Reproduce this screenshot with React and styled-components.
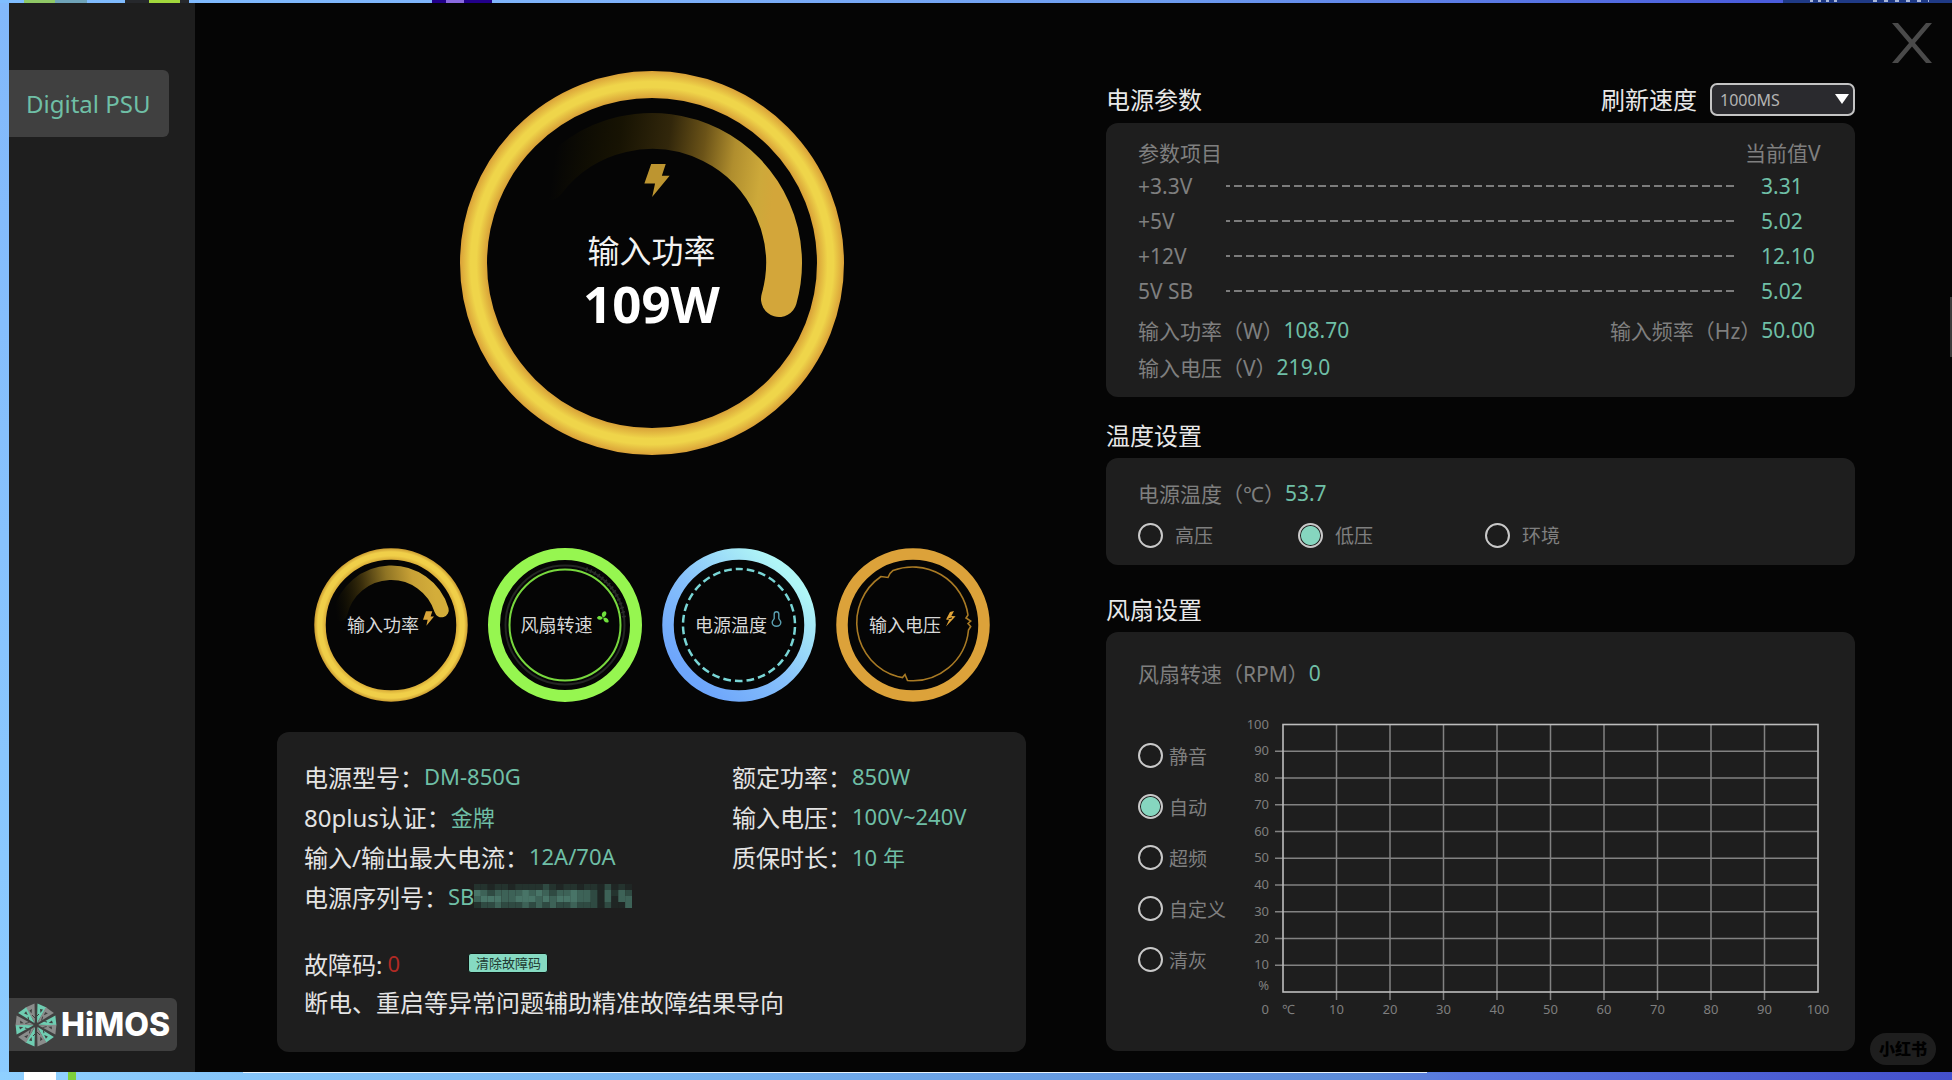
import React, { useState } from "react";
import styled, { createGlobalStyle } from "styled-components";

const Global = createGlobalStyle`
  *, *::before, *::after { box-sizing: border-box; }
  body { margin: 0; background: #050505; }
  body, button, select, input {
    font-family: "Noto Sans", "Noto Sans CJK SC", sans-serif;
  }
  h1, h2, p, dl, dd, dt, fieldset { margin: 0; padding: 0; border: 0; }
`;

const mint = "#6fbfa6";

/* ---------- frame ---------- */

const Desktop = styled.div`
  position: relative;
  min-height: 100vh;
  padding: 3px 0 8px 9px;
  display: flex;
  overflow: hidden;
  background:
    linear-gradient(#8fc866, #8fc866) 24px 0 / 31px 3px no-repeat,
    linear-gradient(#6fa3b8, #6fa3b8) 55px 0 / 32px 3px no-repeat,
    linear-gradient(90deg, #26282c 0 24px, #a2d83c 24px 55px, #26282c 55px) 125px 0 / 64px 3px no-repeat,
    linear-gradient(90deg, #22008a 0 14px, #8a6ae0 14px 32px, #22008a 32px) 432px 0 / 60px 3px no-repeat,
    repeating-linear-gradient(90deg, #aab8dc 0 3px, #1f3a86 3px 8px) 1810px 0 / 30px 2px no-repeat,
    repeating-linear-gradient(90deg, #aab8dc 0 4px, #1f3a86 4px 11px) 1873px 0 / 56px 2px no-repeat,
    linear-gradient(#1f3a86, #1f3a86) 1783px 0 / 200px 3px no-repeat,
    linear-gradient(90deg, #ffffff 0 32px, #8fd0ff 32px 44px, #7ed03a 44px) 24px 100% / 52px 8px no-repeat,
    linear-gradient(#e8f2fb, #e8f2fb) 243px calc(100% - 7px) / 1184px 1px no-repeat,
    linear-gradient(90deg, #7fbdff 0, #7fb3fb 30%, #6d9cf0 60%, #4a5cdc 90%) 0 0 / 100% 3px no-repeat,
    linear-gradient(90deg, #8fd0ff 0, #74b2f0 35%, #5b8ad8 70%, #5876e0 75%, #4450cc 100%) 0 100% / 100% 8px no-repeat,
    linear-gradient(#82b8fb, #8cccff);
`;

const Window = styled.div`
  position: relative;
  flex: 1;
  display: flex;
  background: #050505;
`;

const Sidebar = styled.nav`
  flex: none;
  width: 186px;
  padding: 67px 0 21px;
  display: flex;
  flex-direction: column;
  justify-content: space-between;
  align-items: flex-start;
  background: #1e1e1e;
`;

const TabButton = styled.button`
  width: 160px;
  height: 67px;
  padding: 0 0 0 17px;
  border: 0;
  border-radius: 0 6px 6px 0;
  background: #404040;
  color: ${mint};
  font-size: 24px;
  text-align: left;
  cursor: pointer;
`;

const Brand = styled.div`
  width: 168px;
  height: 53px;
  padding-left: 5px;
  display: flex;
  align-items: center;
  gap: 3px;
  border-radius: 0 6px 6px 0;
  background: #404040;
  color: #fff;
  font-family: Inter, sans-serif;
  font-size: 32px;
  font-weight: 800;
`;

const Main = styled.main`
  flex: 1;
  min-width: 0;
  padding: 68px 97px 20px 82px;
  display: flex;
  align-items: flex-start;
  gap: 80px;
`;

const Column = styled.section`
  flex: 1;
  min-width: 0;
  display: flex;
  flex-direction: column;
`;

const RightColumn = styled(Column)`
  padding-top: 12px;
`;

const CloseButton = styled.button`
  position: absolute;
  top: 20px;
  right: 20px;
  width: 40px;
  height: 40px;
  padding: 0;
  border: 0;
  background: none;
  cursor: pointer;
  svg { display: block; }
`;

const ScrollThumb = styled.div`
  position: absolute;
  top: 294px;
  right: 0;
  width: 2px;
  height: 60px;
  background: #3c3c3c;
`;

const Watermark = styled.div`
  position: absolute;
  right: 16px;
  bottom: 7px;
  width: 66px;
  height: 32px;
  border-radius: 16px;
  background: #1e1e1e;
  color: #000;
  font-size: 16px;
  font-weight: 900;
  line-height: 32px;
  text-align: center;
`;

/* ---------- gauges ---------- */

const BigGauge = styled.div`
  align-self: center;
  width: 384px;
  height: 384px;
  display: grid;
  > * { grid-area: 1 / 1; }
`;

const BigGaugeText = styled.div`
  padding-top: 93px;
  display: flex;
  flex-direction: column;
  align-items: center;
  svg { margin: 0 0 34px 10px; }
`;

const BigLabel = styled.span`
  color: #f2f2f2;
  font-size: 32px;
  line-height: 40px;
`;

const BigValue = styled.strong`
  margin-top: 2px;
  color: #fff;
  font-size: 51px;
  font-weight: 700;
  line-height: 60px;
`;

const GaugeRow = styled.div`
  margin: 93px 0 30px;
  display: flex;
  justify-content: center;
  gap: 20px;
`;

const GaugeButton = styled.button`
  width: 154px;
  height: 154px;
  padding: 0;
  border: 0;
  border-radius: 50%;
  background: none;
  display: grid;
  cursor: pointer;
  > * { grid-area: 1 / 1; }
`;

const GaugeLabel = styled.span`
  display: flex;
  align-items: flex-start;
  align-self: center;
  justify-content: center;
  gap: 4px;
  color: #d8d8d8;
  font-size: 18px;
  line-height: 28px;
`;

/* ---------- cards ---------- */

const Card = styled.div`
  border-radius: 12px;
  background: #1e1e1e;
`;

const InfoCard = styled(Card)`
  padding: 24px 27px 29px;
`;

const InfoGrid = styled.dl`
  display: grid;
  grid-template-columns: 428px 1fr;
`;

const InfoItem = styled.div`
  display: flex;
  align-items: center;
  height: 40px;
  white-space: nowrap;
`;

const InfoLabel = styled.dt`
  color: #e4e4e4;
  font-size: 24px;
`;

const InfoValue = styled.dd`
  display: flex;
  align-items: center;
  color: ${mint};
  font-size: 22px;
`;

const FaultRow = styled.div`
  height: 40px;
  margin-top: 27px;
  display: flex;
  align-items: center;
  color: #e4e4e4;
  font-size: 24px;
`;

const FaultCode = styled.span`
  width: 81px;
  margin-left: 5px;
  color: #b02a24;
  font-size: 22px;
`;

const ClearButton = styled.button`
  width: 80px;
  height: 20px;
  padding: 0;
  border: 1px solid #0c1512;
  border-radius: 3px;
  background: #86dac2;
  color: #1f3a32;
  font-size: 13px;
  line-height: 16px;
  cursor: pointer;
`;

const Note = styled.p`
  color: #e4e4e4;
  font-size: 24px;
  line-height: 40px;
`;

const Heading = styled.h2`
  color: #e8e8e8;
  font-size: 24px;
  font-weight: 400;
  line-height: 32px;
`;

const SectionHeading = styled(Heading)`
  margin: ${(p) => p.$gap}px 0 6px;
`;

const HeadRow = styled.div`
  margin-bottom: 7px;
  height: 33px;
  display: flex;
  align-items: center;
  justify-content: space-between;
`;

const Refresh = styled.label`
  display: flex;
  align-items: center;
  gap: 13px;
  color: #e8e8e8;
  font-size: 24px;
  line-height: 32px;
`;

const SelectBox = styled.span`
  position: relative;
  display: block;
  &::after {
    content: "";
    position: absolute;
    top: 11px;
    right: 6px;
    border: 7px solid transparent;
    border-top: 10px solid #fff;
    border-bottom: 0;
    pointer-events: none;
  }
`;

const Select = styled.select`
  appearance: none;
  display: block;
  width: 145px;
  height: 33px;
  padding: 0 8px;
  border: 2px solid #c4c4c4;
  border-radius: 7px;
  background: #2a2a2e;
  color: #b4b4b4;
  font-size: 16px;
`;

const ParamCard = styled(Card)`
  padding: 14px 32px 12px;
`;

const ParamTable = styled.table`
  width: 100%;
  table-layout: fixed;
  border-collapse: collapse;
  color: #7f7f7f;
  font-size: 21px;
  line-height: 30px;
  th, td { padding: 0; font-weight: 400; text-align: left; white-space: nowrap; }
  thead tr { height: 31px; }
  tbody tr { height: 35px; }
`;

const LabelCol = styled.col` width: 88px; `;
const ValueCol = styled.col` width: 78px; `;

const Dashes = styled.div`
  height: 2px;
  margin-right: 9px;
  background: repeating-linear-gradient(90deg, #7c7c7c 0 4px, transparent 4px 8px, #7c7c7c 8px 12px);
`;

const ValueCell = styled.td`
  && { padding-left: 16px; }
  color: ${mint};
`;

const Readings = styled.dl`
  margin-top: 3px;
  padding-right: 8px;
  display: grid;
  grid-template-columns: 1fr auto;
`;

const Reading = styled.div`
  height: ${(p) => p.$height}px;
  display: flex;
  align-items: center;
  color: #7f7f7f;
  font-size: 21px;
  white-space: nowrap;
  dd { color: ${mint}; }
`;

const TempCard = styled(Card)`
  padding: 14px 32px 9px;
`;

const RadioRow = styled.fieldset`
  height: 42px;
  display: flex;
  align-items: center;
`;

const RadioColumn = styled.fieldset`
  flex: none;
  width: 102px;
  padding-top: 36px;
`;

const RadioLabel = styled.label`
  width: ${(p) => (p.$width ? p.$width + "px" : "auto")};
  height: ${(p) => p.$height}px;
  display: flex;
  align-items: center;
  gap: ${(p) => p.$gap}px;
  color: #7f7f7f;
  font-size: 19px;
  white-space: nowrap;
  cursor: pointer;
`;

const Radio = styled.input`
  appearance: none;
  flex: none;
  width: 25px;
  height: 25px;
  margin: 0;
  border: 2px solid #c9c9c9;
  border-radius: 50%;
  background: #1c1c1c;
  &:checked { background: radial-gradient(circle, #86d6bf 0 9px, #1c1c1c 10px); }
`;

const FanCard = styled(Card)`
  padding: 20px 20px 29px 32px;
`;

const FanBody = styled.div`
  display: flex;
  align-items: flex-start;
`;

const Chart = styled.svg`
  flex: 1;
  min-width: 0;
  display: block;
  margin-top: 18px;
  fill: #7f7f7f;
  font-size: 13px;
`;

/* ---------- drawings ---------- */

const BigRing = () => (
  <svg width="384" height="384" viewBox="0 0 384 384" aria-hidden="true">
    <defs>
      <radialGradient id="bigRing" gradientUnits="userSpaceOnUse" cx="192" cy="192" r="192">
        <stop offset="0.86" stopColor="#d9a238" />
        <stop offset="0.915" stopColor="#efd54a" />
        <stop offset="0.945" stopColor="#efd54a" />
        <stop offset="1" stopColor="#daa138" />
      </radialGradient>
      <linearGradient id="bigArc" gradientUnits="userSpaceOnUse" x1="90" y1="120" x2="310" y2="150">
        <stop offset="0" stopColor="#1a1600" stopOpacity="0" />
        <stop offset="0.28" stopColor="#171303" />
        <stop offset="0.5" stopColor="#32270b" />
        <stop offset="0.66" stopColor="#6b5318" />
        <stop offset="0.8" stopColor="#b08e2e" />
        <stop offset="0.93" stopColor="#cda93a" />
        <stop offset="1" stopColor="#d3a63a" />
      </linearGradient>
    </defs>
    <circle cx="192" cy="192" r="178.5" fill="none" stroke="url(#bigRing)" strokeWidth="27" />
    <path d="M87 112 A132 132 0 0 1 319 228" fill="none" stroke="url(#bigArc)" strokeWidth="36" strokeLinecap="round" />
  </svg>
);

const Bolt = ({ width, height, color }) => (
  <svg width={width} height={height} viewBox="0 0 26 34" aria-hidden="true">
    <path d="M7 0 H22 L18 12 H26 L8 34 L11 20 H0 Z" fill={color} />
  </svg>
);

const ThinBolt = () => (
  <svg width="11" height="16" viewBox="0 0 11 16" aria-hidden="true">
    <path d="M5 1 L9 0 L6.4 5 L10.6 5.2 L1 15.4 L4 9 L1 8.6 Z" fill="#e0a438" />
    <path d="M3.4 8 L7 6.8" stroke="#050505" strokeWidth="1" />
  </svg>
);

const Fan = () => (
  <svg width="12" height="13" viewBox="0 0 12 13" aria-hidden="true" fill="#6fe03c">
    <path d="M6 6.500 C3.800 4 4.800 0.600 8 0.200 C10.600 1.600 9.400 5 6 6.500Z" />
    <path d="M6 7 C3.400 10 0.600 9 0 6.600 C1.200 4.200 4 4.400 6 7Z" />
    <path d="M6.400 6.800 C9.600 6 12 8.400 11.600 11 C9 12.600 6.200 10.400 6.400 6.800Z" />
  </svg>
);

const Thermo = () => (
  <svg width="11" height="16" viewBox="0 0 11 16" aria-hidden="true" fill="none" stroke="#5a9fb0" strokeWidth="1.4">
    <path d="M3.200 7.600 V3 a2.300 2.300 0 0 1 4.600 0 V7.600 C9 9 9.800 10.300 9.800 11.600 a4.300 3.600 0 0 1 -8.600 0 C1.200 10.300 2 9 3.200 7.600Z" />
  </svg>
);

const PowerRing = () => (
  <svg width="154" height="154" viewBox="0 0 154 154" aria-hidden="true">
    <defs>
      <radialGradient id="smallRing" gradientUnits="userSpaceOnUse" cx="77" cy="77" r="77">
        <stop offset="0.84" stopColor="#d5a735" />
        <stop offset="0.9" stopColor="#f0cf49" />
        <stop offset="0.95" stopColor="#f0cf49" />
        <stop offset="1" stopColor="#c89830" />
      </radialGradient>
      <linearGradient id="smallArc" gradientUnits="userSpaceOnUse" x1="22" y1="66" x2="122" y2="50">
        <stop offset="0" stopColor="#1a1600" stopOpacity="0" />
        <stop offset="0.3" stopColor="#3a2e0c" />
        <stop offset="0.55" stopColor="#8f7424" />
        <stop offset="0.8" stopColor="#c8a136" />
        <stop offset="1" stopColor="#d3ad3a" />
      </linearGradient>
    </defs>
    <circle cx="77" cy="77" r="71" fill="none" stroke="url(#smallRing)" strokeWidth="11.500" />
    <path d="M26 66 A52.500 52.500 0 0 1 127.500 62" fill="none" stroke="url(#smallArc)" strokeWidth="14.500" strokeLinecap="round" />
  </svg>
);

const FanRing = () => (
  <svg width="154" height="154" viewBox="0 0 154 154" aria-hidden="true" fill="none">
    <circle cx="77" cy="77" r="71" stroke="#96f650" strokeWidth="12" />
    <circle cx="77" cy="77" r="59.500" stroke="#242624" strokeWidth="2" />
    <path d="M98 21 A59.500 59.500 0 0 1 136 70" stroke="#2c2e2c" strokeWidth="4" strokeDasharray="1.500 3" />
    <circle cx="77" cy="77" r="55.500" stroke="#78d83e" strokeWidth="2" />
  </svg>
);

const TempRing = () => (
  <svg width="154" height="154" viewBox="0 0 154 154" aria-hidden="true" fill="none">
    <defs>
      <linearGradient id="tempRing" x1="0.15" y1="0.85" x2="0.85" y2="0.15">
        <stop offset="0" stopColor="#6ea6fb" />
        <stop offset="0.45" stopColor="#86c0fb" />
        <stop offset="1" stopColor="#b0f6f6" />
      </linearGradient>
    </defs>
    <circle cx="77" cy="77" r="71" stroke="url(#tempRing)" strokeWidth="11.500" />
    <circle cx="77" cy="77" r="56" stroke="#79d6d6" strokeWidth="2.500" strokeDasharray="7.730 4" strokeDashoffset="3.900" transform="rotate(-90 77 77)" />
  </svg>
);

const VoltRing = () => (
  <svg width="154" height="154" viewBox="0 0 154 154" aria-hidden="true" fill="none">
    <circle cx="77" cy="77" r="71" stroke="#dca23a" strokeWidth="11.500" />
    <path
      d="M57 22.500 A56 56 0 0 1 132 67 L130 70 L134.700 73 L132 75.500 L134.700 78.500 L132.500 82 A56 56 0 0 1 71.500 132.500 L69 126.500 L66.500 129.500 L61.500 128.500 A56 56 0 0 1 45 28.500 L52 29.500 L54 25.500 Z"
      stroke="#a87a24"
      strokeWidth="1.600"
    />
  </svg>
);

const CloseIcon = () => (
  <svg width="40" height="40" viewBox="0 0 40 40" aria-hidden="true" fill="#4a4a4a">
    <path d="M0 0 H6 L20 16.500 L34 0 H40 L23 20 L40 40 H34 L20 23.500 L6 40 H0 L17 20 Z" />
  </svg>
);

const BrandMark = () => (
  <svg width="44" height="44" viewBox="-22 -22 44 44" aria-hidden="true">
    {[0, 60, 120, 180, 240, 300].map((a) => (
      <g key={a} transform={`rotate(${a})`}>
        <path d="M1 -2 L1.500 -21.500 L10.500 -17.500 Z" fill="#6fcdb2" />
        <path d="M4 -16 L7 -15.500 L4.500 -12 Z" fill="#404040" />
        <path d="M-1 -2 L-1.500 -21.500 L-10.500 -17.500 Z" fill="#8a8c8b" />
        <path d="M-6.500 -14.500 L-4 -16 L-4.500 -11.500 Z" fill="#404040" />
        <path d="M1 -9 L3 -11 M-1 -7 L-4 -10" stroke="#404040" strokeWidth="1" fill="none" />
      </g>
    ))}
  </svg>
);

/* Serial digits stay masked behind coarse blocks. */
const maskRows = [
  "11011011112101101102010",
  "43233334343233433203132",
  "34443344434344433203033",
  "12232223232322322202003",
];
const maskTones = ["#1f2624", "#24332e", "#2f4a42", "#3d6257", "#487467"];

const SerialMask = () => (
  <svg width="158" height="24" viewBox="0 0 161 24" preserveAspectRatio="none" role="img" aria-label="masked">
    {maskRows.map((row, y) =>
      row.split("").map((t, x) => (
        <rect key={x + "-" + y} x={x * 7} y={y * 6} width="7" height="6" fill={maskTones[t]} />
      ))
    )}
  </svg>
);

const ticks = [10, 20, 30, 40, 50, 60, 70, 80, 90];
const px = (v) => 43 + v * 5.35;
const py = (v) => 280 - v * 2.675;

const FanChart = () => (
  <Chart viewBox="0 0 595 310" role="img" aria-label="风扇转速曲线">
    <g stroke="#828282" strokeWidth="1.500">
      {ticks.map((t) => (
        <g key={t}>
          <line x1={px(t)} x2={px(t)} y1={py(100)} y2={py(0) + 8} />
          <line x1={px(0) - 8} x2={px(100)} y1={py(t)} y2={py(t)} />
        </g>
      ))}
    </g>
    <rect x={px(0)} y={py(100)} width="535" height="267.5" fill="none" stroke="#bdbdbd" strokeWidth="1.600" />
    <g textAnchor="end">
      {[...ticks, 100].map((t) => (
        <text key={t} x="29" y={py(t) + 4}>{t}</text>
      ))}
      <text x="29" y="278">%</text>
      <text x="29" y="302">0</text>
    </g>
    <text x="42" y="302">℃</text>
    <g textAnchor="middle">
      {[...ticks, 100].map((t) => (
        <text key={t} x={px(t)} y="302">{t}</text>
      ))}
    </g>
  </Chart>
);

/* ---------- data ---------- */

const gauges = [
  { label: "输入功率", ring: <PowerRing />, icon: <Bolt width="11" height="15" color="#d9a53a" /> },
  { label: "风扇转速", ring: <FanRing />, icon: <Fan /> },
  { label: "电源温度", ring: <TempRing />, icon: <Thermo /> },
  { label: "输入电压", ring: <VoltRing />, icon: <ThinBolt /> },
];

const info = [
  ["电源型号：", "DM-850G"],
  ["额定功率：", "850W"],
  ["80plus认证：", "金牌"],
  ["输入电压：", "100V~240V"],
  ["输入/输出最大电流：", "12A/70A"],
  ["质保时长：", "10 年"],
  ["电源序列号：", <>SB<SerialMask /></>],
];

const rails = [
  ["+3.3V", "3.31"],
  ["+5V", "5.02"],
  ["+12V", "12.10"],
  ["5V SB", "5.02"],
];

const probes = [
  ["高压", 160],
  ["低压", 187],
  ["环境", 0],
];

const fanModes = ["静音", "自动", "超频", "自定义", "清灰"];

export default function App() {
  const [probe, setProbe] = useState("低压");
  const [mode, setMode] = useState("自动");

  return (
    <>
      <Global />
      <Desktop>
        <Window>
          <Sidebar>
            <TabButton type="button">Digital PSU</TabButton>
            <Brand><BrandMark />HiMOS</Brand>
          </Sidebar>
          <Main>
            <Column>
              <BigGauge>
                <BigRing />
                <BigGaugeText>
                  <Bolt width="26" height="33" color="#bd9530" />
                  <BigLabel>输入功率</BigLabel>
                  <BigValue>109W</BigValue>
                </BigGaugeText>
              </BigGauge>
              <GaugeRow>
                {gauges.map((g) => (
                  <GaugeButton type="button" key={g.label}>
                    {g.ring}
                    <GaugeLabel>{g.label}{g.icon}</GaugeLabel>
                  </GaugeButton>
                ))}
              </GaugeRow>
              <InfoCard>
                <InfoGrid>
                  {info.map(([label, value]) => (
                    <InfoItem key={label}>
                      <InfoLabel>{label}</InfoLabel>
                      <InfoValue>{value}</InfoValue>
                    </InfoItem>
                  ))}
                </InfoGrid>
                <FaultRow>
                  故障码:
                  <FaultCode>0</FaultCode>
                  <ClearButton type="button">清除故障码</ClearButton>
                </FaultRow>
                <Note>断电、重启等异常问题辅助精准故障结果导向</Note>
              </InfoCard>
            </Column>

            <RightColumn>
              <HeadRow>
                <Heading>电源参数</Heading>
                <Refresh htmlFor="refresh">
                  刷新速度
                  <SelectBox>
                    <Select id="refresh" defaultValue="1000">
                      <option value="1000">1000MS</option>
                      <option value="2000">2000MS</option>
                    </Select>
                  </SelectBox>
                </Refresh>
              </HeadRow>
              <ParamCard>
                <ParamTable>
                  <colgroup><LabelCol /><col /><ValueCol /></colgroup>
                  <thead>
                    <tr><th colSpan={2}>参数项目</th><th>当前值V</th></tr>
                  </thead>
                  <tbody>
                    {rails.map(([name, value]) => (
                      <tr key={name}>
                        <th scope="row">{name}</th>
                        <td><Dashes /></td>
                        <ValueCell>{value}</ValueCell>
                      </tr>
                    ))}
                  </tbody>
                </ParamTable>
                <Readings>
                  <Reading $height={37}><dt>输入功率（W）</dt><dd>108.70</dd></Reading>
                  <Reading $height={37}><dt>输入频率（Hz）</dt><dd>50.00</dd></Reading>
                  <Reading $height={37}><dt>输入电压（V）</dt><dd>219.0</dd></Reading>
                </Readings>
              </ParamCard>

              <SectionHeading $gap={23}>温度设置</SectionHeading>
              <TempCard>
                <dl>
                  <Reading $height={42}><dt>电源温度（℃）</dt><dd>53.7</dd></Reading>
                </dl>
                <RadioRow>
                  {probes.map(([name, width]) => (
                    <RadioLabel key={name} $width={width} $height={42} $gap={12}>
                      <Radio type="radio" name="probe" checked={probe === name} onChange={() => setProbe(name)} />
                      {name}
                    </RadioLabel>
                  ))}
                </RadioRow>
              </TempCard>

              <SectionHeading $gap={29}>风扇设置</SectionHeading>
              <FanCard>
                <dl>
                  <Reading $height={42}><dt>风扇转速（RPM）</dt><dd>0</dd></Reading>
                </dl>
                <FanBody>
                  <RadioColumn>
                    {fanModes.map((name) => (
                      <RadioLabel key={name} $height={51} $gap={6}>
                        <Radio type="radio" name="mode" checked={mode === name} onChange={() => setMode(name)} />
                        {name}
                      </RadioLabel>
                    ))}
                  </RadioColumn>
                  <FanChart />
                </FanBody>
              </FanCard>
            </RightColumn>
          </Main>
          <CloseButton type="button" aria-label="关闭"><CloseIcon /></CloseButton>
          <ScrollThumb />
          <Watermark>小红书</Watermark>
        </Window>
      </Desktop>
    </>
  );
}
